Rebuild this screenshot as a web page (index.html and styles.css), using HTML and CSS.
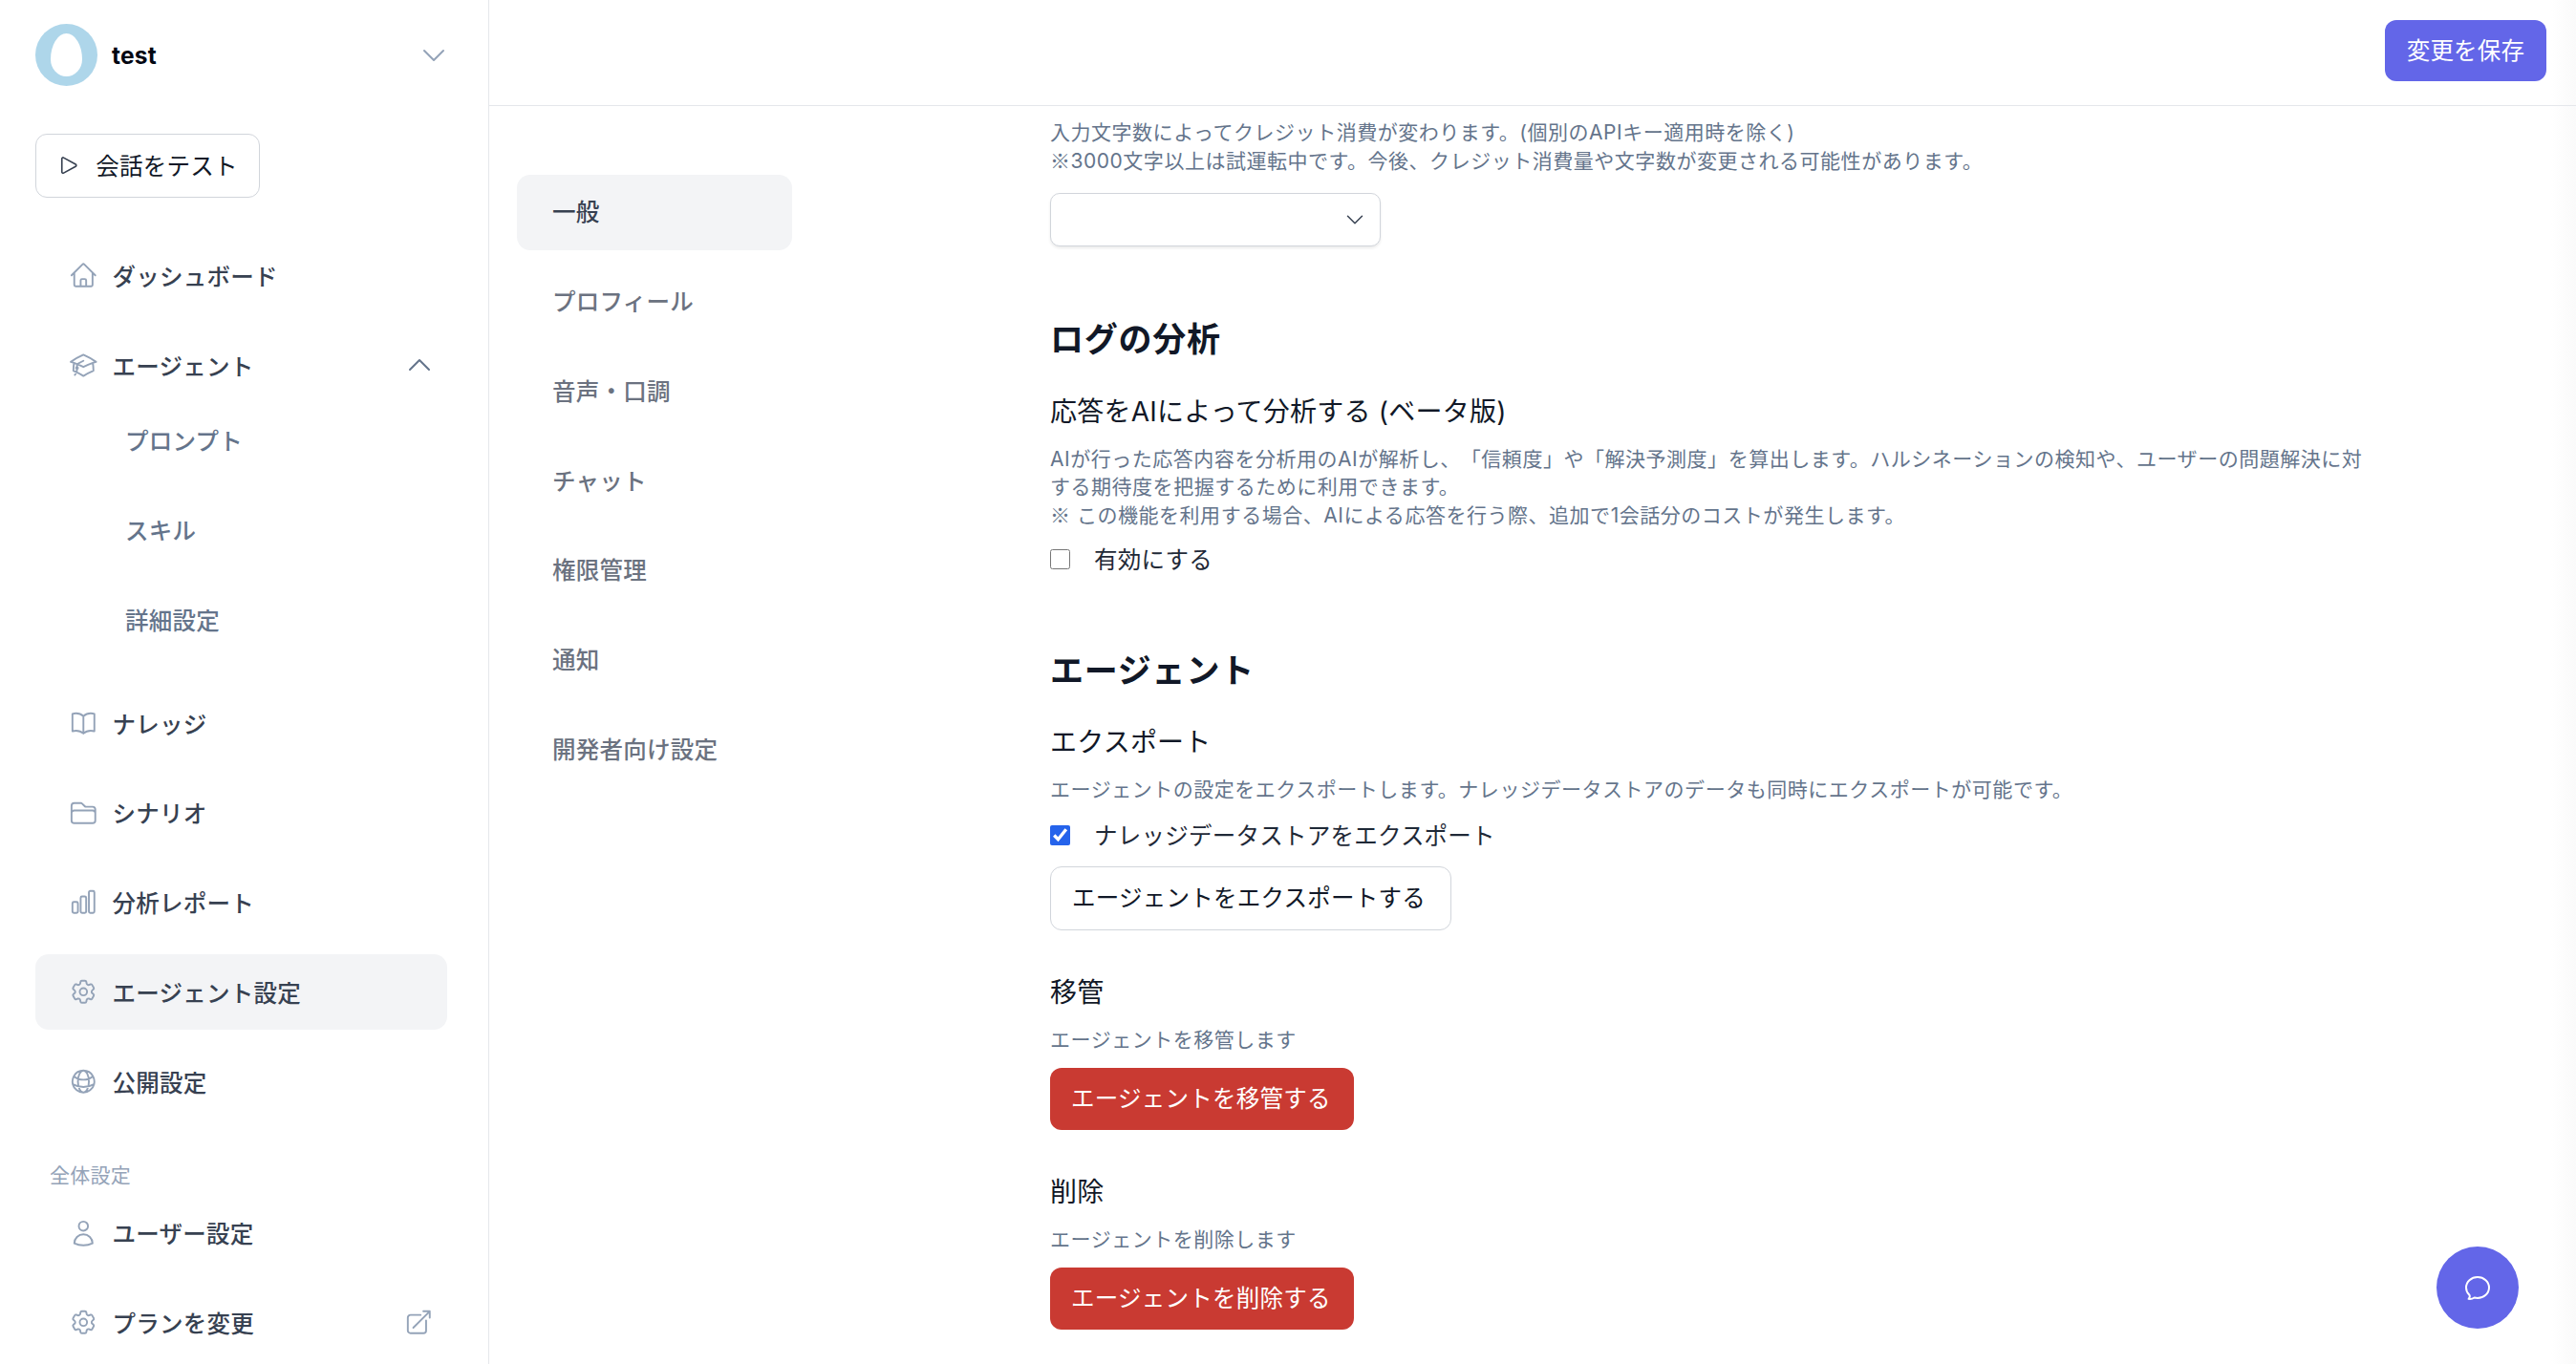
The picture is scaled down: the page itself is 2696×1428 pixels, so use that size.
FILE: index.html
```html
<!DOCTYPE html>
<html lang="ja">
<head>
<meta charset="utf-8">
<title>エージェント設定</title>
<link rel="stylesheet" href="styles.css">
</head>
<body>
<svg class="sprite" xmlns="http://www.w3.org/2000/svg">
  <symbol id="i-home" viewBox="0 0 24 24"><path d="m2.25 12 8.954-8.955c.44-.439 1.152-.439 1.591 0L21.75 12M4.5 9.75v10.125c0 .621.504 1.125 1.125 1.125H9.75v-4.875c0-.621.504-1.125 1.125-1.125h2.25c.621 0 1.125.504 1.125 1.125V21h4.125c.621 0 1.125-.504 1.125-1.125V9.75M8.25 21h8.25"/></symbol>
  <symbol id="i-cap" viewBox="0 0 24 24"><path d="M4.26 10.147a60.438 60.438 0 0 0-.491 6.347A48.62 48.62 0 0 1 12 20.904a48.62 48.62 0 0 1 8.232-4.41 60.46 60.46 0 0 0-.491-6.347m-15.482 0a50.636 50.636 0 0 0-2.658-.813A59.906 59.906 0 0 1 12 3.493a59.903 59.903 0 0 1 10.399 5.84c-.896.248-1.783.52-2.658.814m-15.482 0A50.717 50.717 0 0 1 12 13.489a50.702 50.702 0 0 1 7.74-3.342M6.75 15a.75.75 0 1 0 0-1.5.75.75 0 0 0 0 1.5Zm0 0v-3.675A55.378 55.378 0 0 1 12 8.443m-7.007 11.55A5.981 5.981 0 0 0 6.75 15.75v-1.5"/></symbol>
  <symbol id="i-book" viewBox="0 0 24 24"><path d="M12 6.042A8.967 8.967 0 0 0 6 3.75c-1.052 0-2.062.18-3 .512v14.25A8.987 8.987 0 0 1 6 18c2.305 0 4.408.867 6 2.292m0-14.25a8.966 8.966 0 0 1 6-2.292c1.052 0 2.062.18 3 .512v14.25A8.987 8.987 0 0 0 18 18a8.967 8.967 0 0 0-6 2.292m0-14.25v14.25"/></symbol>
  <symbol id="i-folder" viewBox="0 0 24 24"><path d="M2.25 12.75V12A2.25 2.25 0 0 1 4.5 9.75h15A2.25 2.25 0 0 1 21.75 12v.75m-8.69-6.44-2.12-2.12a1.5 1.5 0 0 0-1.061-.44H4.5A2.25 2.25 0 0 0 2.25 6v12a2.25 2.25 0 0 0 2.25 2.25h15A2.25 2.25 0 0 0 21.75 18V9a2.25 2.25 0 0 0-2.25-2.25h-5.379a1.5 1.5 0 0 1-1.06-.44Z"/></symbol>
  <symbol id="i-chart" viewBox="0 0 24 24"><path d="M3 13.125C3 12.504 3.504 12 4.125 12h2.25c.621 0 1.125.504 1.125 1.125v6.75C7.5 20.496 6.996 21 6.375 21h-2.25A1.125 1.125 0 0 1 3 19.875v-6.75ZM9.75 8.625c0-.621.504-1.125 1.125-1.125h2.25c.621 0 1.125.504 1.125 1.125v11.25c0 .621-.504 1.125-1.125 1.125h-2.25a1.125 1.125 0 0 1-1.125-1.125V8.625ZM16.5 4.125c0-.621.504-1.125 1.125-1.125h2.25C20.496 3 21 3.504 21 4.125v15.75c0 .621-.504 1.125-1.125 1.125h-2.25a1.125 1.125 0 0 1-1.125-1.125V4.125Z"/></symbol>
  <symbol id="i-cog" viewBox="0 0 24 24"><path d="M9.594 3.94c.09-.542.56-.94 1.11-.94h2.593c.55 0 1.02.398 1.11.94l.213 1.281c.063.374.313.686.645.87.074.04.147.083.22.127.325.196.72.257 1.075.124l1.217-.456a1.125 1.125 0 0 1 1.37.49l1.296 2.247a1.125 1.125 0 0 1-.26 1.431l-1.003.827c-.293.241-.438.613-.43.992a7.723 7.723 0 0 1 0 .255c-.008.378.137.75.43.991l1.004.827c.424.35.534.955.26 1.43l-1.298 2.247a1.125 1.125 0 0 1-1.369.491l-1.217-.456c-.355-.133-.75-.072-1.076.124a6.47 6.47 0 0 1-.22.128c-.331.183-.581.495-.644.869l-.213 1.281c-.09.543-.56.94-1.11.94h-2.594c-.55 0-1.019-.398-1.11-.94l-.213-1.281c-.062-.374-.312-.686-.644-.87a6.52 6.52 0 0 1-.22-.127c-.325-.196-.72-.257-1.076-.124l-1.217.456a1.125 1.125 0 0 1-1.369-.49l-1.297-2.247a1.125 1.125 0 0 1 .26-1.431l1.004-.827c.292-.24.437-.613.43-.991a6.932 6.932 0 0 1 0-.255c.007-.38-.138-.751-.43-.992l-1.004-.827a1.125 1.125 0 0 1-.26-1.43l1.297-2.247a1.125 1.125 0 0 1 1.37-.491l1.216.456c.356.133.751.072 1.076-.124.072-.044.146-.086.22-.128.332-.183.582-.495.644-.869l.214-1.28Z"/><path d="M15 12a3 3 0 1 1-6 0 3 3 0 0 1 6 0Z"/></symbol>
  <symbol id="i-globe" viewBox="0 0 24 24"><path d="M12 21a9.004 9.004 0 0 0 8.716-6.747M12 21a9.004 9.004 0 0 1-8.716-6.747M12 21c2.485 0 4.5-4.03 4.5-9S14.485 3 12 3m0 18c-2.485 0-4.5-4.03-4.5-9S9.515 3 12 3m0 0a8.997 8.997 0 0 1 7.843 4.582M12 3a8.997 8.997 0 0 0-7.843 4.582m15.686 0A11.953 11.953 0 0 1 12 10.5c-2.998 0-5.74-1.1-7.843-2.918m15.686 0A8.959 8.959 0 0 1 21 12c0 .778-.099 1.533-.284 2.253m0 0A17.919 17.919 0 0 1 12 16.5c-3.162 0-6.133-.815-8.716-2.247m0 0A9.015 9.015 0 0 1 3 12c0-1.605.42-3.113 1.157-4.418"/></symbol>
  <symbol id="i-user" viewBox="0 0 24 24"><path d="M15.75 6a3.75 3.75 0 1 1-7.5 0 3.75 3.75 0 0 1 7.5 0ZM4.501 20.118a7.5 7.5 0 0 1 14.998 0A17.933 17.933 0 0 1 12 21.75c-2.676 0-5.216-.584-7.499-1.632Z"/></symbol>
  <symbol id="i-ext" viewBox="0 0 24 24"><path d="M13.5 6H5.25A2.25 2.25 0 0 0 3 8.25v10.5A2.25 2.25 0 0 0 5.25 21h10.5A2.25 2.25 0 0 0 18 18.75V10.5m-10.5 6L21 3m0 0h-5.25M21 3v5.25"/></symbol>
  <symbol id="i-play" viewBox="0 0 24 24"><path d="M5.25 5.653c0-.856.917-1.398 1.667-.986l11.54 6.347a1.125 1.125 0 0 1 0 1.972l-11.54 6.347a1.125 1.125 0 0 1-1.667-.986V5.653Z"/></symbol>
  <symbol id="i-down" viewBox="0 0 24 24"><path d="m19.5 8.25-7.5 7.5-7.5-7.5"/></symbol>
  <symbol id="i-up" viewBox="0 0 24 24"><path d="m4.5 15.75 7.5-7.5 7.5 7.5"/></symbol>
  <symbol id="i-chat" viewBox="0 0 24 24"><path d="M12 20.25c4.97 0 9-3.694 9-8.25s-4.03-8.25-9-8.25S3 7.444 3 12c0 2.104.859 4.023 2.273 5.48.432.447.74 1.04.586 1.641a4.483 4.483 0 0 1-.923 1.785A5.969 5.969 0 0 0 6 21c1.282 0 2.47-.402 3.445-1.087.81.22 1.668.337 2.555.337Z"/></symbol>
</svg>

<div class="app">
  <aside class="sidebar">
    <div class="brand">
      <span class="avatar"><span class="avatar-egg"></span></span>
      <span class="brand-name">test</span>
      <svg class="icon brand-caret"><use href="#i-down"/></svg>
    </div>
    <button class="btn btn-test" type="button"><svg class="icon icon-play"><use href="#i-play"/></svg>会話をテスト</button>
    <nav class="nav">
      <a class="nav-item"><svg class="icon"><use href="#i-home"/></svg>ダッシュボード</a>
      <div class="nav-group">
        <a class="nav-item"><svg class="icon"><use href="#i-cap"/></svg>エージェント<svg class="icon nav-end nav-up"><use href="#i-up"/></svg></a>
        <a class="nav-sub">プロンプト</a>
        <a class="nav-sub">スキル</a>
        <a class="nav-sub">詳細設定</a>
      </div>
      <a class="nav-item"><svg class="icon"><use href="#i-book"/></svg>ナレッジ</a>
      <a class="nav-item"><svg class="icon"><use href="#i-folder"/></svg>シナリオ</a>
      <a class="nav-item"><svg class="icon"><use href="#i-chart"/></svg>分析レポート</a>
      <a class="nav-item is-active"><svg class="icon"><use href="#i-cog"/></svg>エージェント設定</a>
      <a class="nav-item"><svg class="icon"><use href="#i-globe"/></svg>公開設定</a>
      <div class="nav-label">全体設定</div>
      <a class="nav-item nav-after-label"><svg class="icon"><use href="#i-user"/></svg>ユーザー設定</a>
      <a class="nav-item"><svg class="icon"><use href="#i-cog"/></svg>プランを変更<svg class="icon nav-end"><use href="#i-ext"/></svg></a>
    </nav>
  </aside>

  <div class="main">
    <header class="topbar">
      <button class="btn btn-primary" type="button">変更を保存</button>
    </header>
    <div class="body">
      <nav class="subnav">
        <a class="subnav-item is-active">一般</a>
        <a class="subnav-item">プロフィール</a>
        <a class="subnav-item">音声・口調</a>
        <a class="subnav-item">チャット</a>
        <a class="subnav-item">権限管理</a>
        <a class="subnav-item">通知</a>
        <a class="subnav-item">開発者向け設定</a>
      </nav>
      <section class="content">
        <p class="desc">入力文字数によってクレジット消費が変わります。(個別のAPIキー適用時を除く)<br><span class="ja">※</span>3000文字以上は試運転中です。今後、クレジット消費量や文字数が変更される可能性があります。</p>
        <div class="select"><svg class="icon select-caret"><use href="#i-down"/></svg></div>

        <h2 class="h-section h-log">ログの分析</h2>
        <h3 class="h-sub">応答をAIによって分析する (ベータ版)</h3>
        <p class="desc desc-sub">AIが行った応答内容を分析用のAIが解析し、「信頼度」や「解決予測度」を算出します。ハルシネーションの検知や、ユーザーの問題解決に対する期待度を把握するために利用できます。<br><span class="ja">※</span> この機能を利用する場合、AIによる応答を行う際、追加で1会話分のコストが発生します。</p>
        <label class="check check-log"><input type="checkbox">有効にする</label>

        <h2 class="h-section h-agent">エージェント</h2>
        <h3 class="h-sub h-sub-tight">エクスポート</h3>
        <p class="desc desc-sub">エージェントの設定をエクスポートします。ナレッジデータストアのデータも同時にエクスポートが可能です。</p>
        <label class="check check-export"><input type="checkbox" checked>ナレッジデータストアをエクスポート</label>
        <button class="btn btn-outline" type="button">エージェントをエクスポートする</button>

        <h3 class="h-sub h-block">移管</h3>
        <p class="desc desc-sub">エージェントを移管します</p>
        <button class="btn btn-danger" type="button">エージェントを移管する</button>

        <h3 class="h-sub h-block">削除</h3>
        <p class="desc desc-sub">エージェントを削除します</p>
        <button class="btn btn-danger" type="button">エージェントを削除する</button>
      </section>
    </div>
  </div>
</div>

<button class="chat-fab" type="button" aria-label="チャット"><svg class="icon"><use href="#i-chat"/></svg></button>
</body>
</html>
```

FILE: styles.css
```css
* { box-sizing: border-box; }

html, body {
  margin: 0;
  height: 100%;
  overflow: hidden;
  background: #fff;
  font-family: Inter, "Noto Sans CJK JP", sans-serif;
  letter-spacing: .015em;
  text-spacing-trim: space-all;
  color: #111827;
}

.ja { font-family: "Noto Sans CJK JP", sans-serif; }

.sprite { width: 0; height: 0; position: absolute; }

.icon {
  flex: none;
  width: 30.6px;
  height: 30.6px;
  fill: none;
  stroke: #94a3b8;
  stroke-width: 1.5;
  stroke-linecap: round;
  stroke-linejoin: round;
}

.app { display: flex; height: 1428px; }

/* Sidebar */
.sidebar {
  flex: none;
  width: 512px;
  border-right: 1px solid #e5e7eb;
  padding: 25px 0 0 37px;
}

.brand { display: flex; align-items: center; width: 431px; height: 65px; }

.avatar {
  flex: none;
  display: flex;
  align-items: center;
  justify-content: center;
  width: 65px;
  height: 65px;
  border-radius: 50%;
  background: #aed6ea;
}

.avatar-egg {
  width: 33px;
  height: 45px;
  background: #fff;
  border-radius: 50% 50% 50% 50% / 60% 60% 40% 40%;
}

.brand-name { margin-left: 15px; font-size: 24.5px; font-weight: 700; color: #030712; }
.brand-caret { margin: 0 -2px 0 auto; width: 32px; height: 32px; }

.btn {
  display: inline-flex;
  align-items: center;
  border-radius: 12px;
  font-family: inherit;
  font-size: 24.5px;
  font-weight: 500;
  letter-spacing: inherit;
  cursor: pointer;
}

.btn-test {
  margin-top: 50px;
  width: 235px;
  height: 67px;
  padding: 0 0 3px 21px;
  background: #fff;
  border: 1px solid #d1d5db;
  color: #111827;
  font-weight: 400;
}

.icon-play { width: 26.25px; height: 26.25px; margin: 3px 15px 0 0; stroke: #374151; }

.nav { display: flex; flex-direction: column; gap: 15px; width: 431px; margin-top: 42px; }
.nav-group { display: flex; flex-direction: column; margin-bottom: 15px; }

.nav-item {
  display: flex;
  align-items: center;
  gap: 15px;
  height: 78.75px;
  padding: 0 14px 0 35px;
  border-radius: 14px;
  font-size: 24.5px;
  font-weight: 500;
  color: #374151;
}

.nav-item.is-active { background: #f3f4f6; }
.nav-end { margin-left: auto; }
.nav-up { width: 32px; height: 32px; margin-right: -1px; stroke: #64748b; }

.nav-sub {
  display: flex;
  align-items: center;
  height: 78.75px;
  margin-bottom: 15px;
  padding-left: 94px;
  font-size: 24.5px;
  font-weight: 500;
  color: #64748b;
}

.nav-sub:last-child { margin-bottom: 0; }

.nav-label {
  margin-top: 29px;
  padding-left: 15px;
  font-size: 21px;
  line-height: 29px;
  color: #94a3b8;
}

.nav-after-label { margin-top: -8px; }

/* Main */
.main {
  flex: 1;
  min-width: 0;
  display: flex;
  flex-direction: column;
  background: linear-gradient(to right, #fff calc(100% - 26px), #fafafa);
}

.topbar {
  flex: none;
  display: flex;
  align-items: flex-start;
  justify-content: flex-end;
  height: 111px;
  padding: 21px 31px 0 0;
  border-bottom: 1px solid #e5e7eb;
}

.btn-primary {
  justify-content: center;
  width: 169px;
  height: 64px;
  padding: 0 0 3px;
  border: 0;
  background: #6366e8;
  color: #fff;
  font-weight: 400;
}

.body { flex: 1; min-height: 0; display: flex; align-items: flex-start; }

.subnav {
  flex: none;
  display: flex;
  flex-direction: column;
  gap: 15px;
  width: 288px;
  margin: 72px 0 0 29px;
}

.subnav-item {
  display: flex;
  align-items: center;
  height: 78.75px;
  padding: 0 0 3px 37px;
  border-radius: 14px;
  font-size: 24.5px;
  font-weight: 500;
  color: #6b7280;
}

.subnav-item.is-active { background: #f3f4f6; color: #374151; }

.content {
  flex: none;
  width: 1381px;
  margin-left: 270px;
  padding-top: 13px;
}

.desc { margin: 0; font-size: 21px; line-height: 29px; letter-spacing: .025em; color: #64748b; }
.desc-sub { margin-top: 14px; }

.select {
  display: flex;
  align-items: center;
  justify-content: flex-end;
  width: 346px;
  height: 56px;
  margin-top: 19px;
  padding-right: 14px;
  background: #fff;
  border: 1px solid #d1d5db;
  border-radius: 10px;
  box-shadow: 0 2px 3px rgba(0, 0, 0, .08);
}

.select-caret { width: 24px; height: 24px; stroke: #374151; }

.h-section { margin: 0; font-size: 35px; line-height: 49px; font-weight: 700; letter-spacing: .022em; color: #111827; }
.h-log { margin-top: 73px; }
.h-agent { margin-top: 72.5px; }

.h-sub { margin: 30px 0 0; font-size: 28px; line-height: 42px; font-weight: 400; color: #111827; }
.h-sub-tight { margin-top: 29px; }
.h-block { margin-top: 44px; }

.check {
  display: flex;
  align-items: center;
  height: 42px;
  font-size: 24.5px;
  font-weight: 400;
  color: #1f2937;
}

.check input {
  width: 21px;
  height: 21px;
  margin: 2px 25px 0 0;
  accent-color: #2563eb;
}

.check-log { margin-top: 9px; }
.check-export { margin-top: 12px; }

.btn-outline {
  display: flex;
  margin-top: 12px;
  width: 420px;
  height: 67px;
  padding: 0 0 3px 22px;
  background: #fff;
  border: 1px solid #d1d5db;
  color: #111827;
  font-weight: 400;
}

.btn-danger {
  display: flex;
  margin-top: 15px;
  width: 318px;
  height: 65px;
  padding: 0 0 3px 22px;
  border: 0;
  background: #c93a32;
  color: #fff;
  font-weight: 400;
}

.chat-fab {
  position: fixed;
  right: 60px;
  bottom: 37px;
  display: flex;
  align-items: center;
  justify-content: center;
  width: 86px;
  height: 86px;
  border: 0;
  border-radius: 50%;
  background: #6366e8;
  cursor: pointer;
}

.chat-fab .icon { width: 32px; height: 32px; stroke: #fff; }
```
